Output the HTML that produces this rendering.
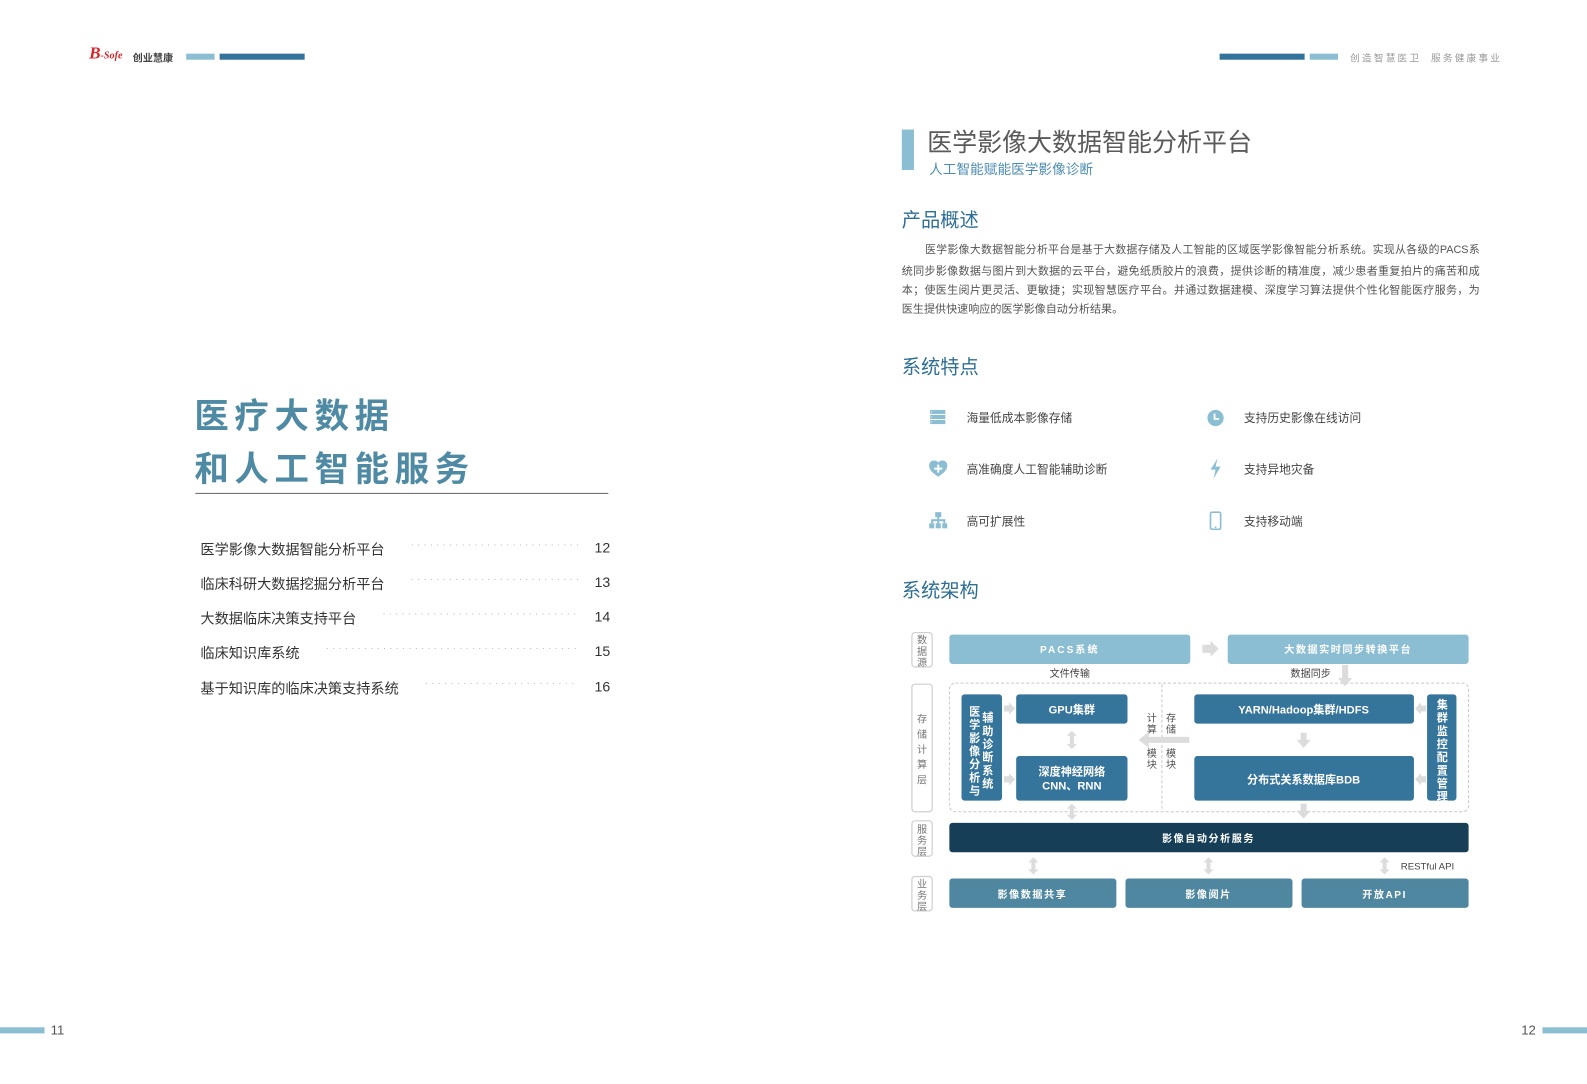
<!DOCTYPE html>
<html><head><meta charset="utf-8">
<style>
html,body{margin:0;padding:0;background:#fff;overflow:hidden;width:1587px;height:1084px}
#w{position:absolute;left:0;top:0;width:1568px;height:1071px;transform:scale(1.01212);transform-origin:0 0;font-family:"Liberation Sans","Noto Sans CJK SC",sans-serif}
.a{position:absolute;white-space:nowrap}
.toc{position:absolute;left:198px;width:405px;font-size:14px;color:#333;height:20px}
.toc .t{position:absolute;left:0;top:0}
.toc .d{position:absolute;top:-2px;right:32px;color:#bbb;letter-spacing:3.5px;font-size:10px;overflow:hidden;text-align:right}
.toc .n{position:absolute;right:0;top:0;font-size:14px;color:#333}
.p{position:absolute;left:891px;width:571px;font-size:10.95px;color:#555;text-align:justify;text-align-last:justify;white-space:nowrap;height:19px}
.h2{position:absolute;left:891px;font-size:19px;color:#2d6e94}
.ft{position:absolute;font-size:11.6px;color:#444}
</style></head><body><div id="w">

<div class="a" style="left:88px;top:43px;font-family:'Liberation Serif',serif;font-style:italic;font-weight:bold;color:#d8252a;font-size:17px">B<span style="font-size:10px">-Sofe</span></div>
<div class="a" style="left:131px;top:49px;font-size:10px;color:#444;font-weight:bold">创业慧康</div>
<div class="a" style="left:184px;top:53px;width:28px;height:6px;background:#8bbdd3"></div>
<div class="a" style="left:217px;top:53px;width:84px;height:6px;background:#33729a"></div>
<div class="a" style="left:1205px;top:53px;width:84px;height:6px;background:#33729a"></div>
<div class="a" style="left:1294px;top:53px;width:28px;height:6px;background:#8bbdd3"></div>
<div class="a" style="left:1334px;top:50px;font-size:9.5px;color:#999;letter-spacing:2.2px">创造智慧医卫&nbsp;&nbsp;服务健康事业</div>

<div class="a" style="left:192px;top:386px;font-size:34px;font-weight:bold;color:#4e8aa4;letter-spacing:5.6px;line-height:52px">医疗大数据<br>和人工智能服务</div>
<div class="a" style="left:193px;top:487px;width:408px;height:1px;background:#666"></div>

<div class="toc" style="top:533px"><span class="t">医学影像大数据智能分析平台</span><span class="d" style="width:165px">..........................................</span><span class="n">12</span></div>
<div class="toc" style="top:567px"><span class="t">临床科研大数据挖掘分析平台</span><span class="d" style="width:165px">..........................................</span><span class="n">13</span></div>
<div class="toc" style="top:601px"><span class="t">大数据临床决策支持平台</span><span class="d" style="width:193px">..................................................</span><span class="n">14</span></div>
<div class="toc" style="top:635px"><span class="t">临床知识库系统</span><span class="d" style="width:249px">..................................................................</span><span class="n">15</span></div>
<div class="toc" style="top:670px"><span class="t">基于知识库的临床决策支持系统</span><span class="d" style="width:151px">........................................</span><span class="n">16</span></div>

<div class="a" style="left:891px;top:128px;width:12px;height:40px;background:#8bbdd3"></div>
<div class="a" style="left:916px;top:121px;font-size:24.7px;color:#5a5a5a">医学影像大数据智能分析平台</div>
<div class="a" style="left:918px;top:156px;font-size:13.5px;color:#4e8db3">人工智能赋能医学影像诊断</div>

<div class="h2" style="top:203px">产品概述</div>
<div class="p" style="top:239px;text-indent:23px;font-size:10.7px">医学影像大数据智能分析平台是基于大数据存储及人工智能的区域医学影像智能分析系统。实现从各级的PACS系</div>
<div class="p" style="top:259px">统同步影像数据与图片到大数据的云平台，避免纸质胶片的浪费，提供诊断的精准度，减少患者重复拍片的痛苦和成</div>
<div class="p" style="top:278px">本；使医生阅片更灵活、更敏捷；实现智慧医疗平台。并通过数据建模、深度学习算法提供个性化智能医疗服务，为</div>
<div class="p" style="top:297px;text-align-last:left">医生提供快速响应的医学影像自动分析结果。</div>

<div class="h2" style="top:348px">系统特点</div>
<svg class="a" style="left:918px;top:403px" width="18" height="18" viewBox="0 0 18 18"><g fill="#8bbdd3"><rect x="1" y="2" width="15" height="4"/><rect x="1" y="7" width="15" height="4"/><rect x="1" y="12" width="15" height="4"/></g><g fill="#fff"><rect x="2" y="3.5" width="1" height="1"/><rect x="2" y="8.5" width="1" height="1"/><rect x="2" y="13.5" width="1" height="1"/></g></svg>
<div class="ft" style="left:955px;top:405px">海量低成本影像存储</div>
<svg class="a" style="left:917px;top:454px" width="20" height="18" viewBox="0 0 20 18"><path d="M10 17 C4 13 1 10 1 6 C1 3 3 1 6 1 C8 1 9 2 10 3 C11 2 12 1 14 1 C17 1 19 3 19 6 C19 10 16 13 10 17Z" fill="#8bbdd3"/><path d="M9 5h2v3h3v2h-3v3h-2v-3h-3v-2h3z" fill="#fff"/></svg>
<div class="ft" style="left:955px;top:456px">高准确度人工智能辅助诊断</div>
<svg class="a" style="left:918px;top:505px" width="18" height="18" viewBox="0 0 18 18"><g fill="#8bbdd3"><rect x="6" y="1" width="6" height="5"/><rect x="8" y="6" width="2" height="3"/><rect x="2" y="8" width="14" height="2"/><rect x="2" y="9" width="2" height="3"/><rect x="8" y="9" width="2" height="3"/><rect x="14" y="9" width="2" height="3"/><rect x="0" y="12" width="5" height="5"/><rect x="6.5" y="12" width="5" height="5"/><rect x="13" y="12" width="5" height="5"/></g></svg>
<div class="ft" style="left:955px;top:507px">高可扩展性</div>

<svg class="a" style="left:1192px;top:404px" width="18" height="18" viewBox="0 0 18 18"><circle cx="9" cy="9" r="8" fill="#8bbdd3"/><path d="M8 4.5v5.5h4.5" stroke="#fff" stroke-width="1.8" fill="none"/></svg>
<div class="ft" style="left:1229px;top:405px">支持历史影像在线访问</div>
<svg class="a" style="left:1193px;top:453px" width="16" height="20" viewBox="0 0 16 20"><path d="M10 0 L3 11 H8 L6 20 L13 8 H8 Z" fill="#8bbdd3"/></svg>
<div class="ft" style="left:1229px;top:456px">支持异地灾备</div>
<svg class="a" style="left:1195px;top:505px" width="12" height="19" viewBox="0 0 12 19"><rect x="1" y="1" width="10" height="17" rx="1.5" fill="none" stroke="#8bbdd3" stroke-width="1.6"/><circle cx="6" cy="16" r="0.9" fill="#8bbdd3"/></svg>
<div class="ft" style="left:1229px;top:507px">支持移动端</div>

<div class="h2" style="top:569px">系统架构</div>

<svg class="a" style="left:0;top:0" width="1568" height="1071" viewBox="0 0 1568 1071" font-family="Liberation Sans, Noto Sans CJK SC, sans-serif">
<g fill="none" stroke="#cfcfcf" stroke-width="1.2">
<rect x="901" y="625" width="20" height="34" rx="3"/>
<rect x="901" y="676" width="20" height="126" rx="3"/>
<rect x="901" y="811" width="20" height="35" rx="3"/>
<rect x="901" y="866" width="20" height="34" rx="3"/>
</g>
<g fill="#777" font-size="10" text-anchor="middle">
<text x="911" y="636">数</text><text x="911" y="647">据</text><text x="911" y="658">源</text>
<text x="911" y="714">存</text><text x="911" y="729">储</text><text x="911" y="744">计</text><text x="911" y="759">算</text><text x="911" y="774">层</text>
<text x="911" y="823">服</text><text x="911" y="834">务</text><text x="911" y="845">层</text>
<text x="911" y="877">业</text><text x="911" y="888">务</text><text x="911" y="899">层</text>
</g>
<rect x="938" y="627" width="238" height="29" rx="3" fill="#8bbdd3"/>
<rect x="1213" y="627" width="238" height="29" rx="3" fill="#8bbdd3"/>
<text x="1057" y="645" fill="#fff" font-size="10" font-weight="bold" text-anchor="middle" letter-spacing="2">PACS系统</text>
<text x="1332" y="645" fill="#fff" font-size="10" font-weight="bold" text-anchor="middle" letter-spacing="1.5">大数据实时同步转换平台</text>
<text x="1057" y="669" fill="#444" font-size="10" text-anchor="middle">文件传输</text>
<text x="1295" y="669" fill="#444" font-size="10" text-anchor="middle">数据同步</text>
<rect x="938" y="675" width="513" height="127" rx="6" fill="none" stroke="#c8c8c8" stroke-dasharray="3,2"/>
<line x1="1148" y1="676" x2="1148" y2="801" stroke="#c8c8c8" stroke-dasharray="3,2"/>
<g fill="#35749b">
<rect x="950" y="686" width="40" height="105" rx="3"/>
<rect x="1004" y="686" width="110" height="29" rx="3"/>
<rect x="1004" y="747" width="110" height="44" rx="3"/>
<rect x="1180" y="686" width="217" height="29" rx="3"/>
<rect x="1180" y="747" width="217" height="44" rx="3"/>
<rect x="1410" y="686" width="29" height="105" rx="3"/>
</g>
<g fill="#fff" font-size="11" font-weight="bold" text-anchor="middle">
<text x="1059" y="705">GPU集群</text>
<text x="1059" y="766">深度神经网络</text><text x="1059" y="780">CNN、RNN</text>
<text x="1288" y="705">YARN/Hadoop集群/HDFS</text>
<text x="1288" y="774">分布式关系数据库BDB</text>
<text x="963" y="707">医</text><text x="963" y="720">学</text><text x="963" y="733">影</text><text x="963" y="746">像</text><text x="963" y="759">分</text><text x="963" y="772">析</text><text x="963" y="785">与</text>
<text x="976" y="713">辅</text><text x="976" y="726">助</text><text x="976" y="739">诊</text><text x="976" y="752">断</text><text x="976" y="765">系</text><text x="976" y="778">统</text>
<text x="1425" y="700">集</text><text x="1425" y="713">群</text><text x="1425" y="726">监</text><text x="1425" y="739">控</text><text x="1425" y="752">配</text><text x="1425" y="765">置</text><text x="1425" y="778">管</text><text x="1425" y="791">理</text>
</g>
<g fill="#555" font-size="10" text-anchor="middle">
<text x="1138" y="713">计</text><text x="1138" y="724">算</text><text x="1138" y="748">模</text><text x="1138" y="759">块</text>
<text x="1157" y="713">存</text><text x="1157" y="724">储</text><text x="1157" y="748">模</text><text x="1157" y="759">块</text>
</g>
<rect x="938" y="813" width="513" height="29" rx="3" fill="#163f57"/>
<text x="1194" y="832" fill="#fff" font-size="10" font-weight="bold" text-anchor="middle" letter-spacing="1.5">影像自动分析服务</text>
<g fill="#4f87a0">
<rect x="938" y="868" width="165" height="29" rx="3"/>
<rect x="1112" y="868" width="165" height="29" rx="3"/>
<rect x="1286" y="868" width="165" height="29" rx="3"/>
</g>
<g fill="#fff" font-size="10" font-weight="bold" text-anchor="middle" letter-spacing="1.5">
<text x="1020" y="887">影像数据共享</text><text x="1194" y="887">影像阅片</text><text x="1368" y="887">开放API</text>
</g>
<text x="1384" y="859" fill="#444" font-size="9.5">RESTful API</text>
<g fill="#dcdcdc">
<path d="M1188 637h8v-4l8 8-8 8v-4h-8z"/>
<path d="M1326 657h6v13h4l-7 8-7-8h4z"/>
<path d="M992 697h5v-3l6 6-6 6v-3h-5z"/>
<path d="M992 767h5v-3l6 6-6 6v-3h-5z"/>
<path d="M1059 722l5 5h-3v8h3l-5 5-5-5h3v-8h-3z"/>
<path d="M1059 794l5 5h-3v6h3l-5 5-5-5h3v-6h-3z"/>
<path d="M1175 728h-40v-5l-10 8 10 8v-5h40z"/>
<path d="M1285 724h6v7h4l-7 8-7-8h4z"/>
<path d="M1285 794h6v7h4l-7 8-7-8h4z"/>
<path d="M1409 697h-5v-3l-6 6 6 6v-3h5z"/>
<path d="M1409 767h-5v-3l-6 6 6 6v-3h5z"/>
<path d="M1021 847l5 5h-3v7h3l-5 5-5-5h3v-7h-3z"/>
<path d="M1194 847l5 5h-3v7h3l-5 5-5-5h3v-7h-3z"/>
<path d="M1368 847l5 5h-3v7h3l-5 5-5-5h3v-7h-3z"/>
</g>
</svg>

<div class="a" style="left:0;top:1015px;width:44px;height:6px;background:#8bbdd3"></div>
<div class="a" style="left:50px;top:1010px;font-size:13px;color:#555">11</div>
<div class="a" style="left:1503px;top:1010px;font-size:13px;color:#555">12</div>
<div class="a" style="left:1524px;top:1015px;width:44px;height:6px;background:#8bbdd3"></div>
</div></body></html>
